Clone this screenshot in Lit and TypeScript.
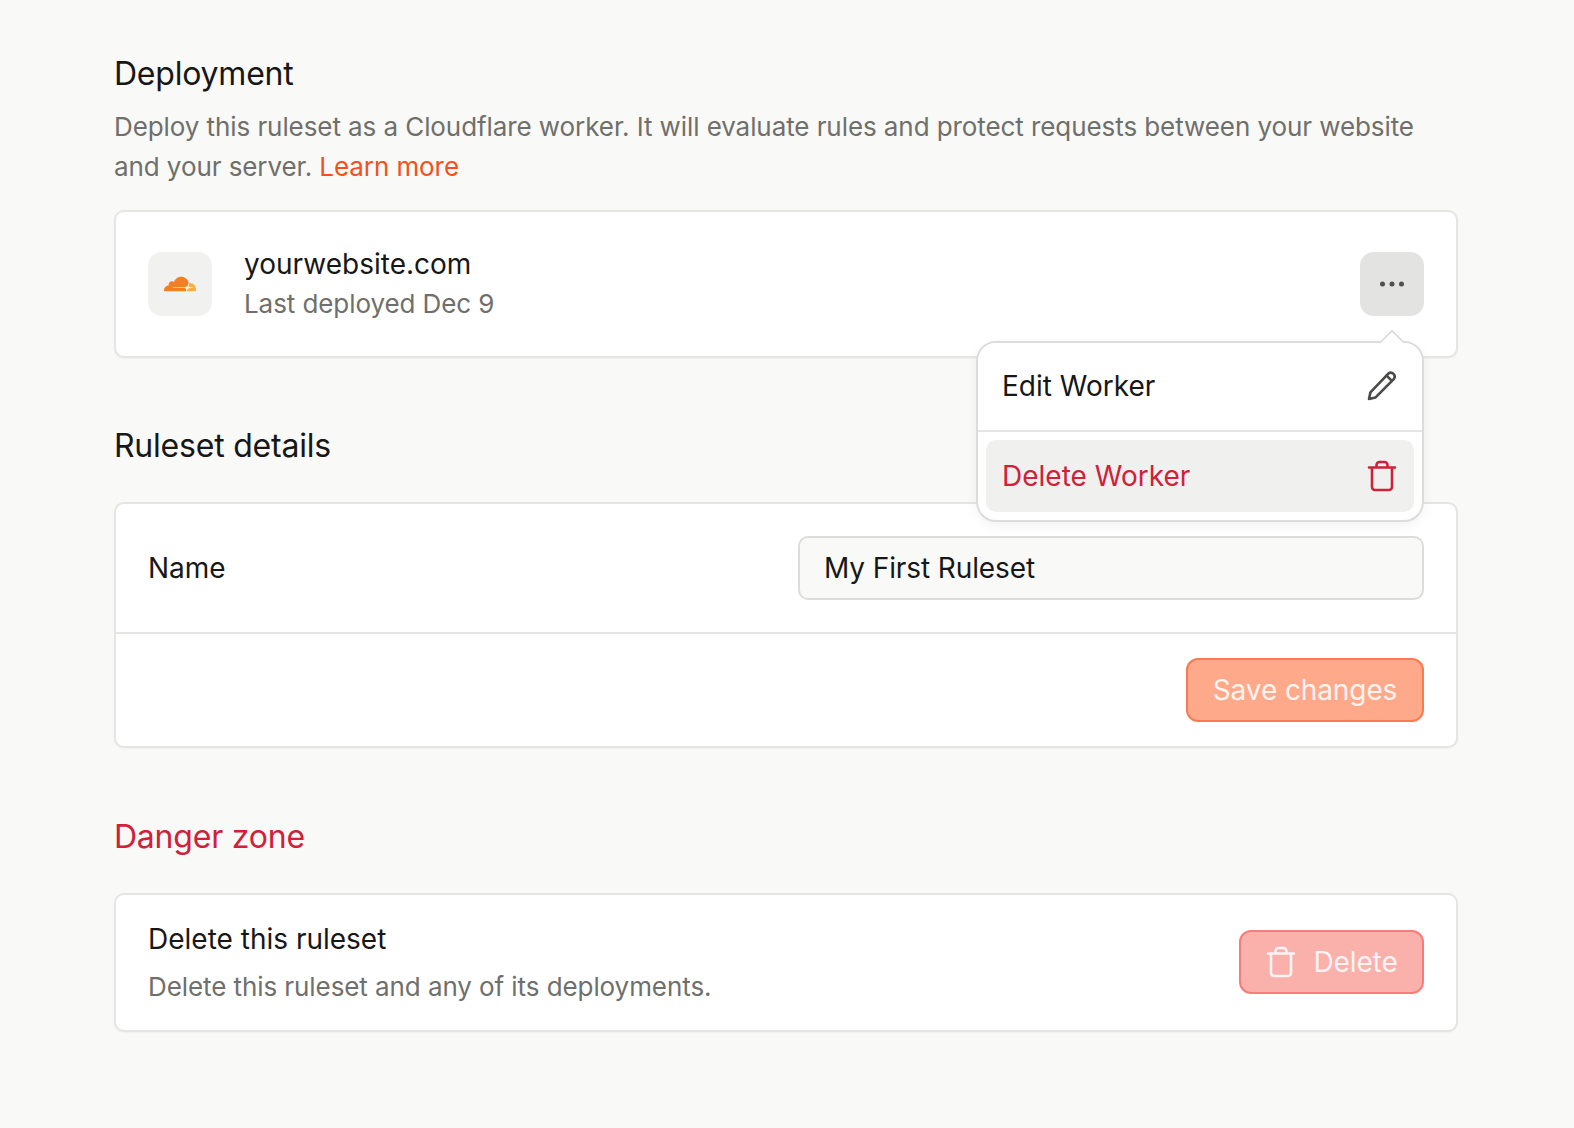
import { LitElement, html, css, svg } from "lit";
import { customElement } from "lit/decorators.js";

const trash = svg`<path d="M3 7.5H29M6 7.5V27a3 3 0 0 0 3 3H23a3 3 0 0 0 3-3V7.5M10.5 7V5a3 3 0 0 1 3-3h5a3 3 0 0 1 3 3v2" fill="none" stroke="currentColor" stroke-width="2.6" stroke-linecap="round" stroke-linejoin="round"/>`;

@customElement("app-root")
export class AppRoot extends LitElement {
  static styles = css`
    :host {
      display: block;
      min-height: 100vh;
      background: #f9f9f7;
      color: #171717;
      font-family: Inter, "Liberation Sans", sans-serif;
      font-size: 28px;
      line-height: 40px;
      letter-spacing: -0.1px;
    }
    .page {
      width: 1344px;
      margin-left: 114px;
      padding-top: 50px;
      display: flex;
      flex-direction: column;
    }
    h2 {
      margin: 0;
      font-size: 32px;
      line-height: 48px;
      font-weight: 440;
      letter-spacing: -0.22px;
    }
    h2.spaced { margin-top: 63.5px; margin-bottom: 32px; }
    h2.danger { color: #cf2139; margin-top: 65px; }
    p.desc {
      margin: 8.5px 0 23.5px;
      font-size: 26px;
      letter-spacing: -0.08px;
      color: #6f6f6b;
    }
    a { color: #f2501c; text-decoration: none; }
    .card {
      box-sizing: border-box;
      background: #fff;
      border: 2px solid #e5e5e3;
      border-radius: 10px;
      box-shadow: 0 1px 2px rgba(0,0,0,0.04);
    }
    .deploy {
      height: 148px;
      padding: 0 32px;
      display: flex;
      align-items: center;
      gap: 32px;
    }
    .logo {
      width: 64px;
      height: 64px;
      border-radius: 14px;
      background: #f1f1ef;
      display: flex;
      align-items: center;
      justify-content: center;
    }
    .logo svg { width: 32px; height: 32px; display: block; }
    .grow { flex: 1; min-width: 0; }
    .strong { font-weight: 440; letter-spacing: 0; }
    .muted { color: #6f6f6b; font-size: 26px; letter-spacing: -0.08px; }
    .more-wrap { position: relative; }
    .more {
      width: 64px;
      height: 64px;
      border-radius: 14px;
      background: #e3e3e1;
      display: flex;
      align-items: center;
      justify-content: center;
    }
    .more svg { width: 32px; height: 32px; display: block; color: #4f4f4d; }
    .menu {
      position: absolute;
      z-index: 2;
      right: 0;
      top: 89px;
      box-sizing: border-box;
      width: 448px;
      height: 181px;
      background: #fff;
      border: 2px solid #dcdcda;
      border-radius: 20px;
      box-shadow: 0 4px 12px rgba(0,0,0,0.05);
      display: flex;
      flex-direction: column;
    }
    .arrow {
      position: absolute;
      right: 21px;
      top: -10px;
      width: 16px;
      height: 16px;
      background: #fff;
      border-top: 2px solid #dcdcda;
      border-left: 2px solid #dcdcda;
      transform: rotate(45deg);
      border-top-left-radius: 2px;
    }
    .item {
      display: flex;
      align-items: center;
      justify-content: space-between;
    }
    .item svg { width: 32px; height: 32px; display: block; flex: none; }
    .item.edit {
      box-sizing: border-box;
      height: 89px;
      padding: 0 24px 1px;
      border-bottom: 2px solid #e5e5e3;
      position: relative;
      border-radius: 18px 18px 0 0;
      background: #fff;
    }
    .item.edit svg { color: #4a4a48; margin-top: -2px; }
    .item.del {
      height: 72px;
      margin: 8px 8px 0;
      padding: 0 16px;
      border-radius: 10px;
      background: #f0f0ef;
      color: #cf2139;
    }
    .row {
      display: grid;
      grid-template-columns: 1fr 1fr;
      gap: 24px;
      align-items: center;
      padding: 32px;
      border-bottom: 2px solid #e5e5e3;
    }
    .input {
      box-sizing: border-box;
      height: 64px;
      padding: 0 24px;
      display: flex;
      align-items: center;
      background: #f9f9f7;
      border: 2px solid #dcdcda;
      border-radius: 10px;
    }
    .actions {
      height: 112px;
      padding: 0 32px;
      display: flex;
      align-items: center;
      justify-content: flex-end;
    }
    .btn {
      box-sizing: border-box;
      height: 64px;
      border-radius: 12px;
      border: 2px solid;
      color: #fff;
      display: flex;
      align-items: center;
      font-weight: 420;
    }
    .btn.save {
      width: 238px;
      justify-content: center;
      background: #ffa98b;
      border-color: #fb7a52;
      color: #fff4ef;
    }
    .btn.delete {
      width: 185px;
      justify-content: center;
      gap: 16px;
      background: #fab0ab;
      border-color: #f97c7a;
      color: #fff4f3;
    }
    .btn svg { width: 32px; height: 32px; display: block; }
    .danger-card {
      height: 139px;
      padding: 0 32px;
      display: flex;
      align-items: center;
    }
    .danger-text { display: flex; flex-direction: column; gap: 8px; padding-top: 2px; }
  `;

  render() {
    return html`
      <div class="page">
        <h2>Deployment</h2>
        <p class="desc">Deploy this ruleset as a Cloudflare worker. It will evaluate rules and protect requests between your website and your server. <a href="#">Learn more</a></p>
        <div class="card deploy">
          <div class="logo">
            <svg viewBox="0 0 24 24">
              <path fill="#f38020" d="M16.5088 16.8447c.1475-.5068.0908-.9707-.1553-1.3154-.2246-.3164-.6045-.499-1.0615-.5205l-8.6592-.1123a.1559.1559 0 0 1-.1333-.0713c-.0283-.042-.0351-.0986-.021-.1553.0278-.084.1123-.1484.2036-.1562l8.7359-.1123c1.0351-.0489 2.1601-.8868 2.5537-1.9136l.499-1.3013c.0215-.0561.0293-.1128.0147-.168-.5625-2.5463-2.835-4.4453-5.5499-4.4453-2.5039 0-4.6284 1.6177-5.3876 3.8614-.4927-.3658-1.1187-.5625-1.794-.499-1.2026.119-2.1665 1.083-2.2861 2.2856-.0283.31-.0069.6128.0635.894C1.5683 13.171 0 14.7754 0 16.752c0 .1748.0142.3515.0352.5273.0141.083.0844.1475.1689.1475h15.9814c.0909 0 .1758-.0645.2032-.1553l.12-.4268z"/>
              <path fill="#faae40" d="M19.2656 11.2813c-.0771 0-.1611 0-.2383.0112-.0566 0-.1054.0415-.127.0976l-.3378 1.1744c-.1475.5068-.0918.9707.1543 1.3164.2256.3164.6055.498 1.0625.5195l1.8437.1133c.0557 0 .1055.0263.1329.0703.0283.043.0351.1074.0214.1562-.0283.084-.1132.1485-.204.1553l-1.921.1123c-1.041.0488-2.1582.8867-2.5527 1.914l-.1406.3585c-.0283.0713.0215.1416.0986.1416h6.5977c.0771 0 .1474-.0489.169-.126.1122-.4082.1757-.837.1757-1.2803 0-2.6025-2.125-4.727-4.7344-4.727"/>
            </svg>
          </div>
          <div class="grow">
            <div class="strong">yourwebsite.com</div>
            <div class="muted">Last deployed Dec 9</div>
          </div>
          <div class="more-wrap">
            <div class="more">
              <svg viewBox="0 0 32 32" fill="currentColor">
                <circle cx="6.5" cy="16" r="2.5"/><circle cx="16" cy="16" r="2.5"/><circle cx="25.5" cy="16" r="2.5"/>
              </svg>
            </div>
            <div class="menu">
              <div class="arrow"></div>
              <div class="item edit">
                <span class="strong">Edit Worker</span>
                <svg viewBox="0 0 32 32" fill="none" stroke="currentColor" stroke-width="2.6" stroke-linejoin="round" stroke-linecap="round">
                  <path d="M3 30l1.4-6.6L22.6 4.4a3.9 3.9 0 0 1 5.4 5.4L9.6 28.4z"/>
                  <path d="M20.6 6.6l5 5"/>
                </svg>
              </div>
              <div class="item del">
                <span class="strong">Delete Worker</span>
                <svg viewBox="0 0 32 32">${trash}</svg>
              </div>
            </div>
          </div>
        </div>

        <h2 class="spaced">Ruleset details</h2>
        <div class="card">
          <div class="row">
            <div class="strong">Name</div>
            <div class="input">My First Ruleset</div>
          </div>
          <div class="actions">
            <div class="btn save">Save changes</div>
          </div>
        </div>

        <h2 class="spaced danger">Danger zone</h2>
        <div class="card danger-card">
          <div class="grow danger-text">
            <div class="strong">Delete this ruleset</div>
            <div class="muted">Delete this ruleset and any of its deployments.</div>
          </div>
          <div class="btn delete">
            <svg viewBox="0 0 32 32">${trash}</svg>
            <span>Delete</span>
          </div>
        </div>
      </div>
    `;
  }
}
